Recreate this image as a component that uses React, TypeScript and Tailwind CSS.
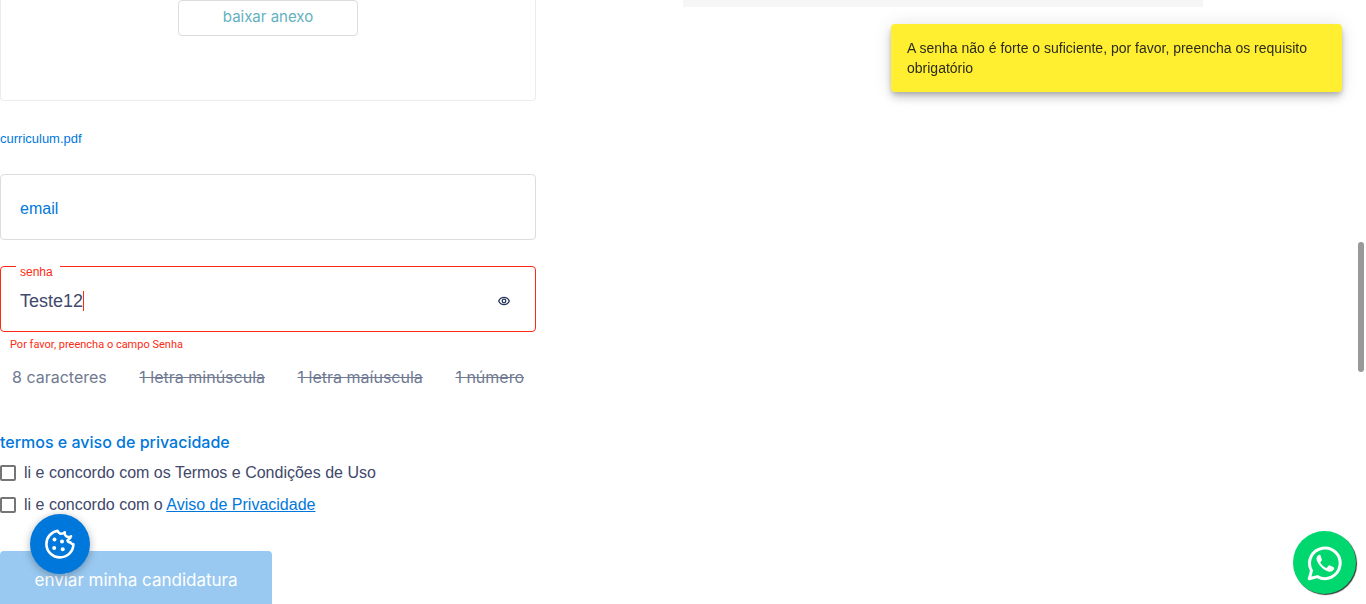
import { useState } from "react";

const requirements = [
  { label: "8 caracteres", done: false },
  { label: "1 letra minúscula", done: true },
  { label: "1 letra maíuscula", done: true },
  { label: "1 número", done: true },
];

function EyeIcon() {
  return (
    <svg viewBox="0 0 12 10" className="h-[10px] w-3" fill="none" stroke="#26365c" strokeWidth="1.3" aria-hidden="true">
      <path d="M.7 5C1.8 2.5 3.7 1.3 6 1.3S10.2 2.5 11.3 5C10.2 7.5 8.3 8.7 6 8.7S1.8 7.5.7 5Z" />
      <circle cx="6" cy="5" r="1.8" />
    </svg>
  );
}

function CookieIcon() {
  return (
    <svg viewBox="0 0 30 30" className="size-[30px]" aria-hidden="true">
      <path
        d="M12.6 1.8C6 2.9 1.4 8.500 1.400 15C1.400 22.500 7.500 28.400 15 28.400C22.300 28.400 28.200 22.700 28.400 15.400C27.300 15.200 26.100 14.500 25.400 13.300C24 13.600 22.700 12.700 22.500 11.300C24.100 10.500 25.600 9.300 26 7.300C24.500 8.200 22.300 8.100 20.900 7C19.700 6.100 19.500 4.900 19.800 3.200C18.200 4.500 16.600 5 15 4.500C13.700 4 12.900 3.100 12.600 1.800Z"
        fill="none"
        stroke="#fff"
        strokeWidth="2.6"
        strokeLinejoin="round"
      />
      <g fill="#fff">
        <circle cx="9.500" cy="10.600" r="2" />
        <circle cx="17" cy="12.500" r="2" />
        <circle cx="9.200" cy="19" r="2" />
        <circle cx="17.700" cy="20.300" r="2" />
      </g>
    </svg>
  );
}

function WhatsAppIcon() {
  return (
    <svg viewBox="0 0 36 36" className="size-9" aria-hidden="true">
      <path
        d="M2.200 33.800L4.500 25.700A15.300 15.300 0 1 1 10.400 31.600Z"
        fill="none"
        stroke="#fff"
        strokeWidth="3"
        strokeLinejoin="round"
      />
      <path
        d="M12.800 9.700C12.300 9.600 11.600 9.800 11 10.400C10 11.400 9.400 12.600 9.500 14.100C9.700 16.100 11 18.200 12.800 20.500C15.200 23.400 18 25.500 21.300 26.500C23.500 27.100 25.700 26.300 26.700 24.700C27.200 23.800 27.300 23 27.100 22.700C26.900 22.300 26.400 22.100 25.700 21.700L22.900 20.400C22.400 20.200 22 20.200 21.600 20.700L20 22.600C19.700 22.900 19.400 23 18.900 22.700C16.700 21.700 14.800 20.100 13.500 17.900C13.200 17.500 13.300 17.200 13.600 16.900L14.700 15.500C14.900 15.200 15 14.900 14.800 14.400L13.600 10.500C13.400 10 13.200 9.700 12.800 9.700Z"
        fill="#fff"
      />
    </svg>
  );
}

const checkbox =
  "size-4 shrink-0 appearance-none rounded-xs border-2 border-[#757575] bg-white checked:bg-[#0078db]";

export default function App() {
  const [email, setEmail] = useState("");
  const [password, setPassword] = useState("Teste12");

  return (
    <div className="h-screen overflow-hidden bg-white font-['Liberation_Sans',Arial,sans-serif] text-base text-[#41486a]">
      <main className="grid grid-cols-2">
        <form className="w-full max-w-[536px]" onSubmit={(e) => e.preventDefault()}>
          <section className="flex justify-center rounded-b border border-t-0 border-[#ececec] pb-16">
            <button
              type="button"
              className="h-9 w-[180px] rounded border border-[#dcdcdc] pb-0.5 font-['Inter',sans-serif] text-[15px] leading-5 text-[#62b1c1]"
            >
              baixar anexo
            </button>
          </section>

          <a href="#curriculum" className="mt-7 block text-[13px] leading-5 text-[#0078db]">
            curriculum.pdf
          </a>

          <div className="relative mt-[25px] flex h-[66px] items-center rounded border border-[#dcdcdc] px-[19px]">
            <input
              id="email"
              type="email"
              aria-label="email"
              placeholder="email"
              value={email}
              onChange={(e) => setEmail(e.target.value)}
              className="w-full pt-1 text-base text-[#41486a] outline-none placeholder:text-[#0078db]"
            />
          </div>

          <div className="relative mt-[26px] flex h-[66px] items-center rounded border border-[#fc2a12] px-[19px] pt-1">
            <label htmlFor="senha" className="absolute -top-px left-[15px] w-11 bg-white px-1 text-xs leading-3 text-[#fc2a12]">
              senha
            </label>
            <input
              id="senha"
              type="text"
              value={password}
              onChange={(e) => setPassword(e.target.value)}
              className="field-sizing-content text-lg leading-6 caret-transparent outline-none"
            />
            <span className="h-5 w-px bg-[#fc2a12]" aria-hidden="true" />
            <button type="button" aria-label="Mostrar senha" className="ml-auto mr-[6px]">
              <EyeIcon />
            </button>
          </div>
          <p className="mt-1 px-[10px] pt-px font-['Roboto',sans-serif] text-[11px] leading-4 text-[#fc2a12]">
            Por favor, preencha o campo Senha
          </p>

          <ul className="mt-3 flex justify-between px-3 font-['Inter',sans-serif] leading-6 text-[#6f7a92]">
            {requirements.map((r) => (
              <li key={r.label} className={r.done ? "line-through" : ""}>
                {r.label}
              </li>
            ))}
          </ul>

          <h2 className="mt-[41px] font-['Inter',sans-serif] font-medium leading-6 text-[#0078db]">
            termos e aviso de privacidade
          </h2>
          <label className="mt-[7px] flex items-center gap-2 leading-6">
            <input type="checkbox" className={checkbox} />
            <span>li e concordo com os Termos e Condições de Uso</span>
          </label>
          <div className="mt-2 flex items-center gap-2 leading-6">
            <input type="checkbox" id="privacidade" className={checkbox} />
            <label htmlFor="privacidade">
              li e concordo com o{" "}
              <a href="#privacidade" className="text-[#0078db] underline">
                Aviso de Privacidade
              </a>
            </label>
          </div>

          <button
            type="submit"
            className="mt-[34px] h-[60px] w-[272px] rounded bg-[#99c9f1] font-['Inter',sans-serif] text-[17px] text-white"
          >
            enviar minha candidatura
          </button>
        </form>

        <aside className="h-[7px] w-full max-w-[520px] bg-[#f6f6f6]" />
      </main>

      <div
        role="alert"
        className="fixed right-6 top-6 w-[451px] rounded bg-[#ffef30] px-4 py-[14px] text-sm leading-5 text-[#2b2b20] shadow-[0_3px_5px_-1px_rgba(0,0,0,0.2),0_6px_10px_0_rgba(0,0,0,0.14),0_1px_18px_0_rgba(0,0,0,0.12)]"
      >
        A senha não é forte o suficiente, por favor, preencha os requisito obrigatório
      </div>

      <button
        type="button"
        aria-label="Preferências de cookies"
        className="fixed bottom-[30px] left-[30px] flex size-[60px] items-center justify-center rounded-full bg-[#0078db] shadow-[0_2px_8px_rgba(0,0,0,0.3)]"
      >
        <CookieIcon />
      </button>

      <a
        href="#whatsapp"
        aria-label="WhatsApp"
        className="fixed bottom-[10px] right-[10px] flex size-[63px] items-center justify-center rounded-full bg-[#00d76f] shadow-[1px_1px_1px_#333]"
      >
        <WhatsAppIcon />
      </a>

      <div className="fixed right-0.5 top-[242px] h-[130px] w-1.5 rounded-full bg-[#999999]" aria-hidden="true" />
    </div>
  );
}
